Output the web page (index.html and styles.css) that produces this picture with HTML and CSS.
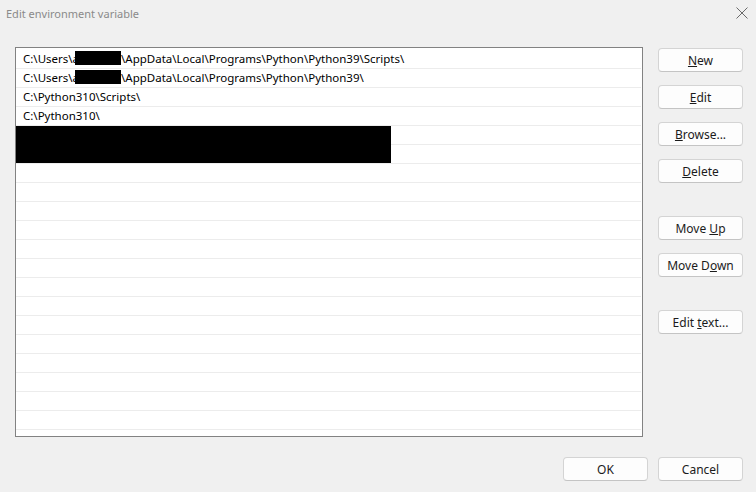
FILE: index.html
```html
<!DOCTYPE html>
<html>
<head>
<meta charset="utf-8">
<link rel="stylesheet" href="styles.css">
</head>
<body>
<div class="dialog">
  <div class="titlebar">
    <span class="title">Edit environment variable</span>
    <svg class="close" width="12" height="12" viewBox="0 0 12 12"><path d="M0.5 0.5 L11.5 11.5 M11.5 0.5 L0.5 11.5" stroke="#6a6a6a" stroke-width="1" fill="none"/></svg>
  </div>
  <div class="content">
    <div class="listbox">
      <div class="row">C:\Users\a<span class="redact"></span>\AppData\Local\Programs\Python\Python39\Scripts\</div>
      <div class="row">C:\Users\a<span class="redact"></span>\AppData\Local\Programs\Python\Python39\</div>
      <div class="row">C:\Python310\Scripts\</div>
      <div class="row">C:\Python310\</div>
      <div class="row"></div>
      <div class="row"></div>
      <div class="row"></div>
      <div class="row"></div>
      <div class="row"></div>
      <div class="row"></div>
      <div class="row"></div>
      <div class="row"></div>
      <div class="row"></div>
      <div class="row"></div>
      <div class="row"></div>
      <div class="row"></div>
      <div class="row"></div>
      <div class="row"></div>
      <div class="row"></div>
      <div class="row"></div>
      <div class="row"></div>
      <div class="blackout"></div>
    </div>
    <div class="buttons">
      <button class="btn"><u>N</u>ew</button>
      <button class="btn"><u>E</u>dit</button>
      <button class="btn"><u>B</u>rowse...</button>
      <button class="btn"><u>D</u>elete</button>
      <button class="btn group">Move <u>U</u>p</button>
      <button class="btn">Move D<u>o</u>wn</button>
      <button class="btn group">Edit <u>t</u>ext...</button>
    </div>
  </div>
  <div class="footer">
    <button class="btn">OK</button>
    <button class="btn">Cancel</button>
  </div>
</div>
</body>
</html>
```
FILE: styles.css
```css
html, body {
  margin: 0;
  padding: 0;
  background: #f0f0f0;
}
body {
  font-family: "Noto Sans", "Liberation Sans", sans-serif;
  font-size: 12px;
  color: #000;
}
.dialog {
  width: 756px;
  height: 492px;
  display: flex;
  flex-direction: column;
  overflow: hidden;
}
.titlebar {
  height: 26px;
  display: flex;
  align-items: center;
  justify-content: space-between;
  padding: 0 8px 0 6px;
}
.title {
  color: #8a8a8a;
  font-size: 11px;
}
.close {
  display: block;
}
.content {
  display: flex;
  gap: 15px;
  padding: 21px 0 0 15px;
}
.listbox {
  position: relative;
  width: 626px;
  height: 386px;
  padding-top: 2px;
  border: 1px solid #828282;
  background: #fff;
  overflow: hidden;
}
.row {
  height: 18px;
  line-height: 18px;
  font-size: 11.5px;
  border-bottom: 1px solid #ececec;
  margin-right: 1px;
  padding-left: 7px;
  white-space: nowrap;
}
.redact {
  display: inline-block;
  width: 46px;
  height: 14px;
  background: #000;
  vertical-align: -2px;
  margin-left: -4px;
}
.blackout {
  position: absolute;
  left: 0;
  top: 78px;
  width: 375px;
  height: 37px;
  background: #000;
}
.buttons {
  display: flex;
  flex-direction: column;
  gap: 13px;
  padding-top: 1px;
}
.btn {
  width: 85px;
  height: 24px;
  box-sizing: border-box;
  border: 1px solid #d4d4d4;
  border-bottom-color: #c4c4c4;
  border-radius: 4px;
  background: #fdfdfd;
  font-family: inherit;
  font-size: 12px;
  color: #1b1b1b;
  padding: 0;
  margin: 0;
}
.btn.group {
  margin-top: 20px;
}
.footer {
  display: flex;
  justify-content: flex-end;
  gap: 10px;
  padding: 20px 13px 0 0;
}
```
